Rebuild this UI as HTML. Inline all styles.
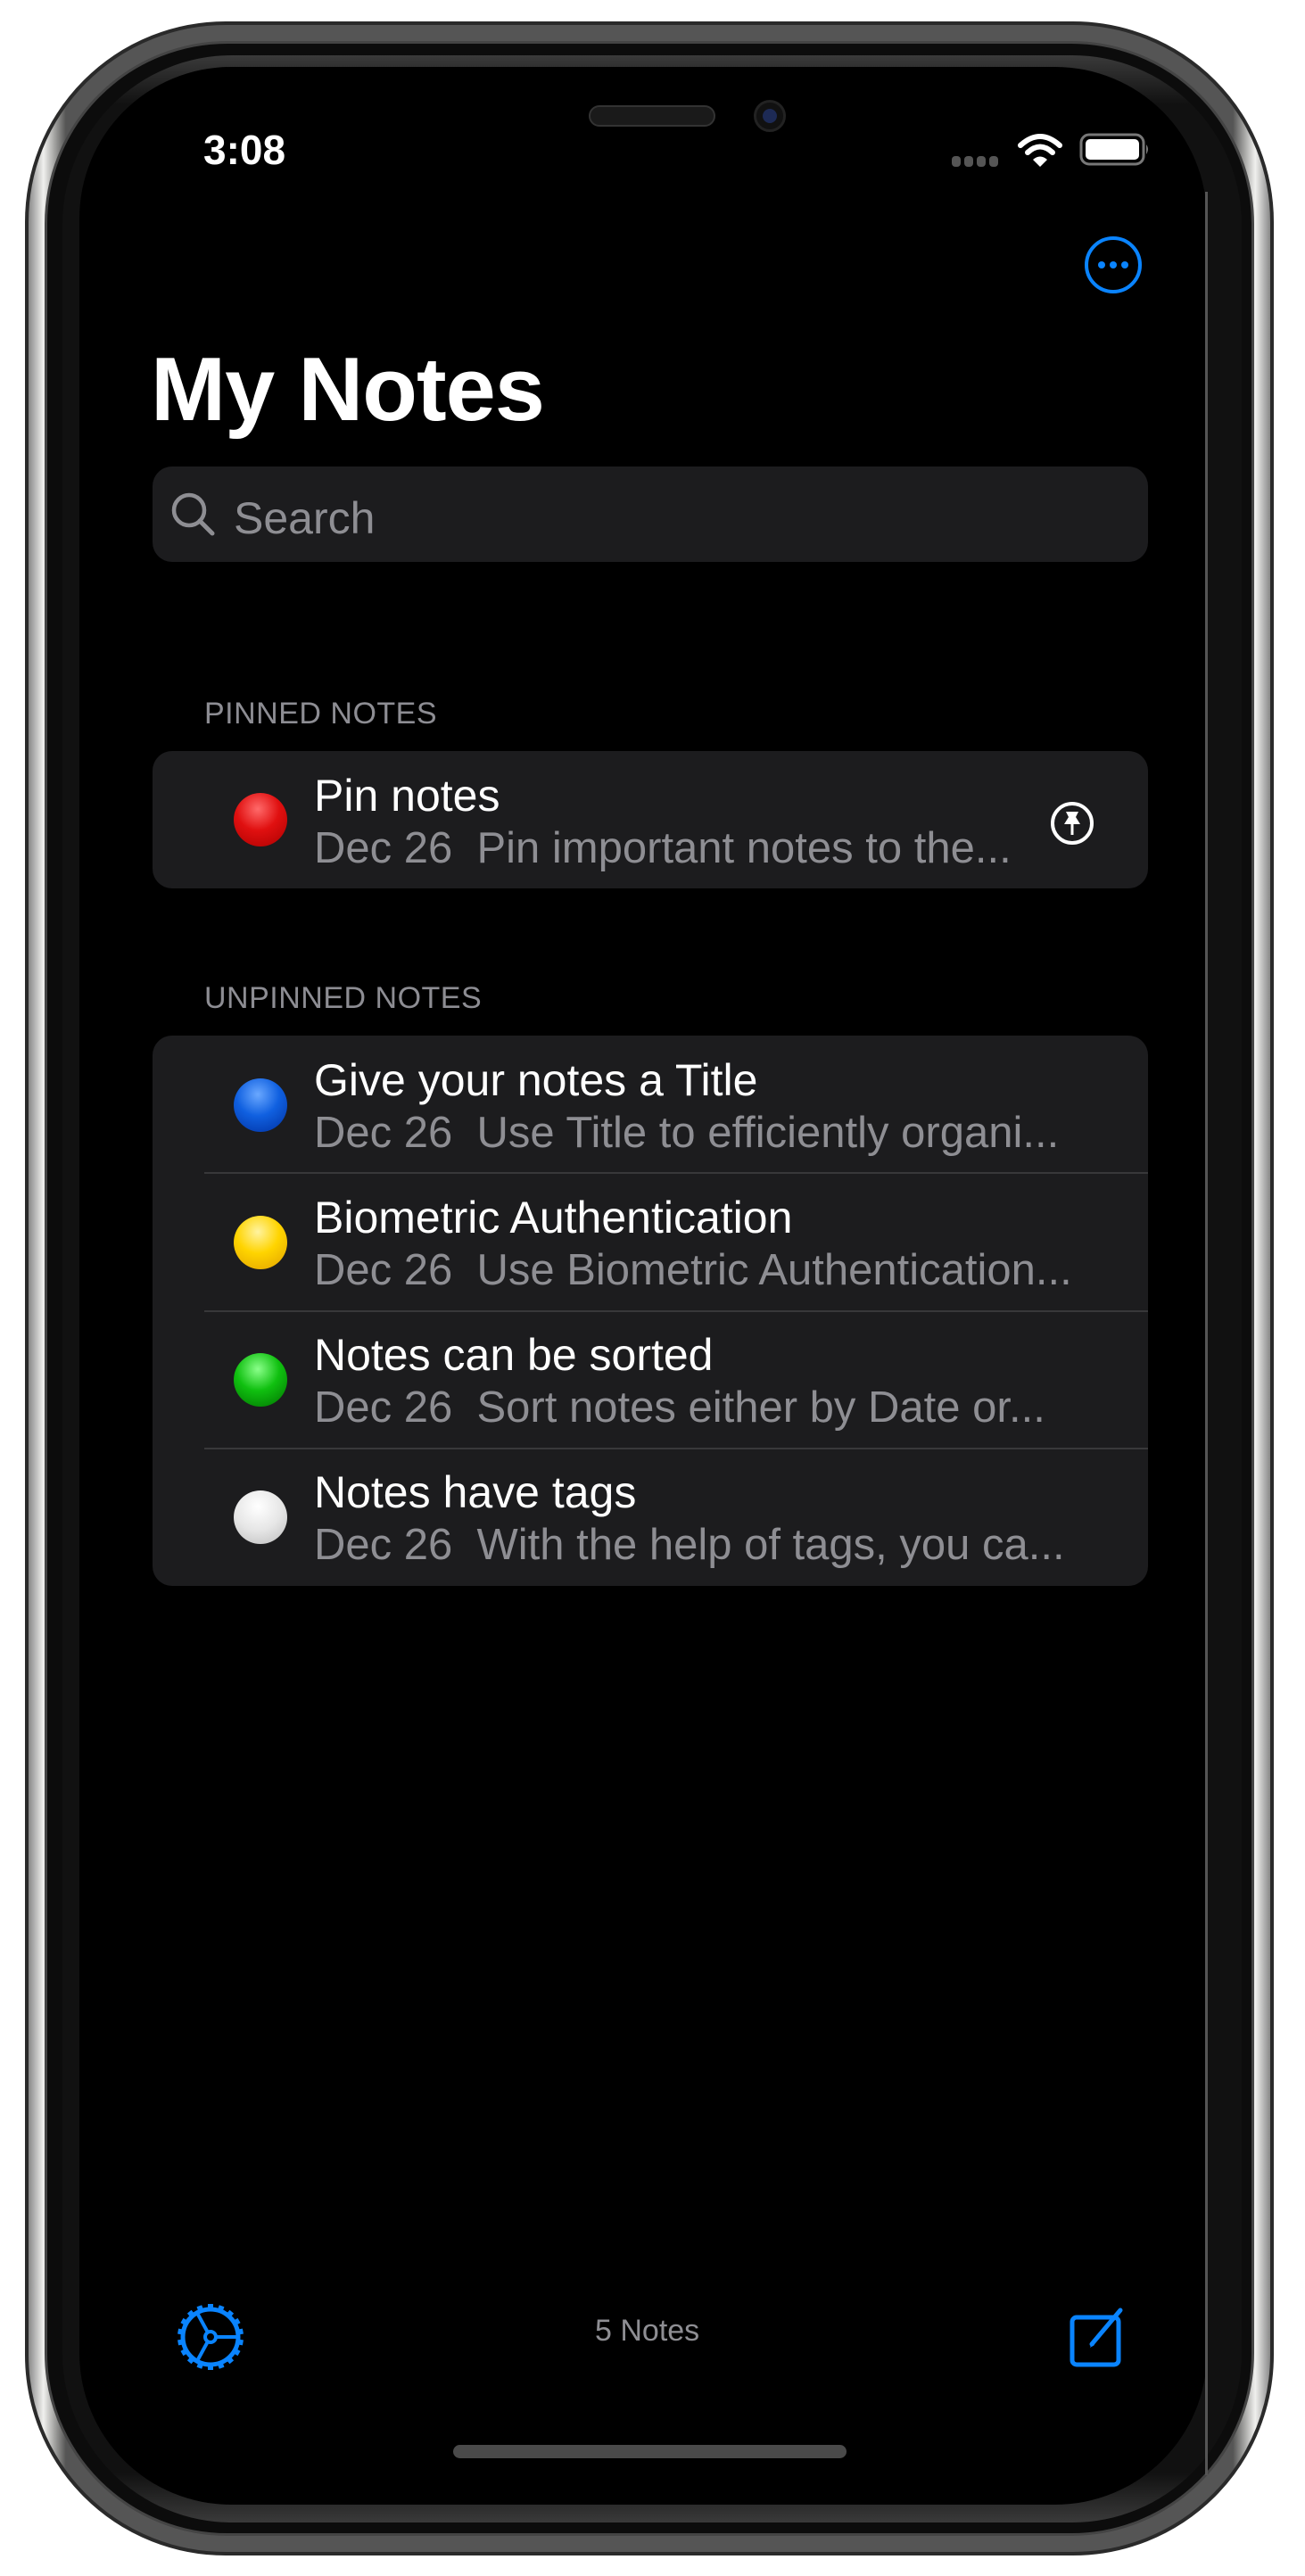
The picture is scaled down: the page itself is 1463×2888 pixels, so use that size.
<!DOCTYPE html>
<html><head><meta charset="utf-8"><style>
*{margin:0;padding:0;box-sizing:border-box}
html,body{width:1463px;height:2888px;background:#fff;overflow:hidden;position:relative;font-family:"Liberation Sans",sans-serif}
.abs{position:absolute}
.frame{left:28px;top:24px;width:1400px;height:2841px;border-radius:225px;background:linear-gradient(90deg,#888 0%,#f0f0ee 1.2%,#9a9a98 2.2%,#555 3%,#555 97%,#9a9a98 97.8%,#f0f0ee 98.8%,#888 100%);border:4px solid #2a2a2a}
.frame2{left:50px;top:46px;width:1356px;height:2797px;border-radius:205px;background:#0c0c0c;border:3px solid #444}
.screen{left:89px;top:75px;width:1264px;height:2733px;border-radius:170px;background:#000}
.card{background:#1c1c1e;border-radius:22px}
.title{color:#fff;font-size:50px;white-space:nowrap}
.sub{color:#8e8e93;font-size:49px;white-space:nowrap}
.hdr{color:#8d8d93;font-size:34px;letter-spacing:0.5px}
.dot{width:60px;height:60px;border-radius:50%}
.sep{height:2px;background:#38383a;left:229px;width:1058px}
</style></head><body>
<div class="abs frame"></div>
<div class="abs frame2"></div>
<div class="abs" style="left:70px;top:62px;width:1322px;height:2766px;border-radius:190px;background:linear-gradient(180deg,#3a3a3a 0%,#111 2%,#111 98%,#3a3a3a 100%)"></div>
<div class="abs screen"></div>
<div class="abs" style="left:1351px;top:215px;width:3px;height:2560px;background:#555"></div>
<!-- speaker & camera -->
<div class="abs" style="left:660px;top:118px;width:142px;height:24px;border-radius:12px;background:#1a1a1a;border:2px solid #333"></div>
<div class="abs" style="left:845px;top:112px;width:36px;height:36px;border-radius:50%;background:#111;border:3px solid #222"><div style="margin:7px;width:16px;height:16px;border-radius:50%;background:#1d2a55"></div></div>
<!-- status -->
<div class="abs" style="left:228px;top:141px;color:#fff;font-size:46px;font-weight:bold">3:08</div>
<svg class="abs" style="left:1060px;top:145px" width="240" height="50">
<g fill="#555"><rect x="7" y="30" width="10" height="12" rx="4"/><rect x="21" y="30" width="10" height="12" rx="4"/><rect x="35" y="30" width="10" height="12" rx="4"/><rect x="49" y="30" width="10" height="12" rx="4"/></g>
<g fill="none" stroke="#fff" stroke-width="6" stroke-linecap="round"><path d="M84 18 Q106 -2 128 18"/><path d="M92 26 Q106 13 120 26"/></g>
<path d="M98 34 L106 42 L114 34 Q106 27 98 34Z" fill="#fff"/>
<rect x="152" y="6" width="70" height="33" rx="9" fill="none" stroke="#777" stroke-width="3"/>
<rect x="157" y="11" width="60" height="23" rx="5" fill="#fff"/>
<path d="M225 17 Q229 22 225 28Z" fill="#777"/>
</svg>
<!-- ellipsis -->
<svg class="abs" style="left:1214px;top:263px" width="68" height="68"><circle cx="34" cy="34" r="30" fill="none" stroke="#0a84ff" stroke-width="4"/><g fill="#0a84ff"><circle cx="21" cy="34" r="4"/><circle cx="34" cy="34" r="4"/><circle cx="47" cy="34" r="4"/></g></svg>
<div class="abs" style="left:169px;top:380px;color:#fff;font-size:101px;font-weight:bold;letter-spacing:-1px">My Notes</div>
<!-- search -->
<div class="abs card" style="left:171px;top:523px;width:1116px;height:107px;background:#1c1c1e"></div>
<svg class="abs" style="left:190px;top:550px" width="56" height="56"><circle cx="22" cy="22" r="17" fill="none" stroke="#8e8e93" stroke-width="4.5"/><path d="M34 34 L48 48" stroke="#8e8e93" stroke-width="5" stroke-linecap="round"/></svg>
<div class="abs" style="left:262px;top:552px;color:#8e8e93;font-size:50px">Search</div>
<!-- pinned -->
<div class="abs hdr" style="left:229px;top:781px">PINNED NOTES</div>
<div class="abs card" style="left:171px;top:842px;width:1116px;height:154px"></div>
<div class="abs dot" style="left:262px;top:889px;background:radial-gradient(circle at 45% 30%,#ff6a6a,#e01010 45%,#a00 100%)"></div>
<div class="abs title" style="left:352px;top:863px">Pin notes</div>
<div class="abs sub" style="left:352px;top:923px">Dec 26&nbsp; Pin important notes to the...</div>
<svg class="abs" style="left:1176px;top:897px" width="52" height="52"><circle cx="26" cy="26" r="22" fill="none" stroke="#fff" stroke-width="4"/><path d="M19 13 H33 L30 19 L35 27 H17 L22 19Z" fill="#fff"/><path d="M26 27 V39" stroke="#fff" stroke-width="3"/></svg>
<!-- unpinned -->
<div class="abs hdr" style="left:229px;top:1100px">UNPINNED NOTES</div>
<div class="abs card" style="left:171px;top:1161px;width:1116px;height:617px"></div>
<div class="abs sep" style="top:1314px"></div>
<div class="abs sep" style="top:1469px"></div>
<div class="abs sep" style="top:1623px"></div>

<div class="abs dot" style="left:262px;top:1209px;background:radial-gradient(circle at 45% 30%,#6aa8ff,#1060e0 45%,#0030a0 100%)"></div>
<div class="abs title" style="left:352px;top:1182px">Give your notes a Title</div>
<div class="abs sub" style="left:352px;top:1242px">Dec 26&nbsp; Use Title to efficiently organi...</div>

<div class="abs dot" style="left:262px;top:1363px;background:radial-gradient(circle at 45% 30%,#fff3a0,#ffd400 45%,#e0a000 100%)"></div>
<div class="abs title" style="left:352px;top:1336px">Biometric Authentication</div>
<div class="abs sub" style="left:352px;top:1396px">Dec 26&nbsp; Use Biometric Authentication...</div>

<div class="abs dot" style="left:262px;top:1517px;background:radial-gradient(circle at 45% 30%,#8aff8a,#10c010 45%,#007000 100%)"></div>
<div class="abs title" style="left:352px;top:1490px">Notes can be sorted</div>
<div class="abs sub" style="left:352px;top:1550px">Dec 26&nbsp; Sort notes either by Date or...</div>

<div class="abs dot" style="left:262px;top:1671px;background:radial-gradient(circle at 45% 30%,#fff,#e6e6e6 50%,#bbb 100%)"></div>
<div class="abs title" style="left:352px;top:1644px">Notes have tags</div>
<div class="abs sub" style="left:352px;top:1704px">Dec 26&nbsp; With the help of tags, you ca...</div>

<!-- toolbar -->
<svg class="abs" style="left:196px;top:2580px" width="80" height="80">
<g transform="translate(40,40)">
<circle r="31" fill="none" stroke="#0a84ff" stroke-width="5"/>
<g fill="#0a84ff">
<rect x="-3" y="-37" width="6" height="8" transform="rotate(0)"/><rect x="-3" y="-37" width="6" height="8" transform="rotate(20)"/><rect x="-3" y="-37" width="6" height="8" transform="rotate(40)"/><rect x="-3" y="-37" width="6" height="8" transform="rotate(60)"/><rect x="-3" y="-37" width="6" height="8" transform="rotate(80)"/><rect x="-3" y="-37" width="6" height="8" transform="rotate(100)"/><rect x="-3" y="-37" width="6" height="8" transform="rotate(120)"/><rect x="-3" y="-37" width="6" height="8" transform="rotate(140)"/><rect x="-3" y="-37" width="6" height="8" transform="rotate(160)"/><rect x="-3" y="-37" width="6" height="8" transform="rotate(180)"/><rect x="-3" y="-37" width="6" height="8" transform="rotate(200)"/><rect x="-3" y="-37" width="6" height="8" transform="rotate(220)"/><rect x="-3" y="-37" width="6" height="8" transform="rotate(240)"/><rect x="-3" y="-37" width="6" height="8" transform="rotate(260)"/><rect x="-3" y="-37" width="6" height="8" transform="rotate(280)"/><rect x="-3" y="-37" width="6" height="8" transform="rotate(300)"/><rect x="-3" y="-37" width="6" height="8" transform="rotate(320)"/><rect x="-3" y="-37" width="6" height="8" transform="rotate(340)"/>
</g>
<circle r="6" fill="none" stroke="#0a84ff" stroke-width="4"/>
<g stroke="#0a84ff" stroke-width="4"><path d="M6 0 H31"/><path d="M-3 -5 L-15 -27"/><path d="M-3 5 L-15 27"/></g>
</g></svg>
<div class="abs" style="left:667px;top:2594px;color:#8e8e93;font-size:34px">5 Notes</div>
<svg class="abs" style="left:1196px;top:2584px" width="70" height="72">
<rect x="6" y="14" width="52" height="53" rx="5" fill="none" stroke="#0a84ff" stroke-width="5"/>
<path d="M28 44 L60 6" stroke="#0a84ff" stroke-width="5" stroke-linecap="round"/>
<path d="M26 48 L28 42 L31 45Z" fill="#0a84ff"/>
</svg>
<div class="abs" style="left:508px;top:2741px;width:441px;height:15px;border-radius:8px;background:#4a4a4a"></div>
</body></html>
